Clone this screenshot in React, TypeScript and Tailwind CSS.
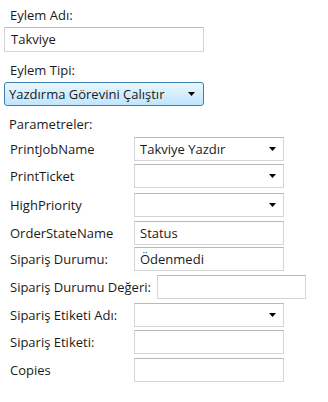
import React from 'react'

type Field = {
  label: string
  value?: string
  kind: 'combo' | 'text'
  mt: string
  wide?: boolean
}

const fields: Field[] = [
  { label: 'PrintJobName', value: 'Takviye Yazdır', kind: 'combo', mt: 'mt-[7px]' },
  { label: 'PrintTicket', kind: 'combo', mt: 'mt-[3px]' },
  { label: 'HighPriority', kind: 'combo', mt: 'mt-[5px]' },
  { label: 'OrderStateName', value: 'Status', kind: 'text', mt: 'mt-[4px]' },
  { label: 'Sipariş Durumu:', value: 'Ödenmedi', kind: 'text', mt: 'mt-[2px]' },
  { label: 'Sipariş Durumu Değeri:', kind: 'text', mt: 'mt-[4px]', wide: true },
  { label: 'Sipariş Etiketi Adı:', kind: 'combo', mt: 'mt-[4px]' },
  { label: 'Sipariş Etiketi:', kind: 'text', mt: 'mt-[3px]' },
  { label: 'Copies', kind: 'text', mt: 'mt-[4px]' },
]

function Arrow() {
  return (
    <svg width="7" height="4" viewBox="0 0 7 4" className="shrink-0">
      <path d="M0 0 H7 L3.5 4 Z" fill="#000" />
    </svg>
  )
}

function Box({ field }: { field: Field }) {
  return (
    <div
      className={`flex h-[24px] items-center border border-[#d5d5d5] border-t-[#b9b9b9] bg-white pl-[5px] pr-[7px] ${
        field.wide ? 'w-[149px]' : 'w-[150px]'
      }`}
    >
      <span className="flex-1 whitespace-nowrap leading-[20px]">{field.value ?? ''}</span>
      {field.kind === 'combo' && <Arrow />}
    </div>
  )
}

export default function App() {
  return (
    <div
      className="h-[402px] w-[328px] bg-white text-[13px] leading-none text-[#1a1a1a]"
      style={{ fontFamily: '"Segoe UI", "Open Sans", "Noto Sans", sans-serif' }}
    >
      <div className="flex flex-col pt-[8px]">
        <div className="pl-[10px] h-[14px] flex items-center">Eylem Adı:</div>
        <div className="ml-[4px] mt-[5px] flex h-[25px] w-[200px] items-center border border-[#d5d5d5] border-t-[#bdbdbd] pl-[6px]">
          Takviye
        </div>
        <div className="pl-[10px] mt-[11px] h-[14px] flex items-center">Eylem Tipi:</div>
        <div className="ml-[4px] mt-[5px] flex h-[24px] w-[200px] items-center rounded-[3px] border border-[#3c7fb1] bg-gradient-to-b from-[#eaf6fd] to-[#bee6fd] pl-[4px] pr-[8px]">
          <span className="flex-1">Yazdırma Görevini Çalıştır</span>
          <Arrow />
        </div>
        <div className="pl-[9px] mt-[12px] h-[12px] flex items-center">Parametreler:</div>

        {fields.map((f) => (
          <div key={f.label} className={`flex items-center pl-[10px] ${f.mt}`}>
            <span className={f.wide ? 'w-[147px]' : 'w-[124px]'}>{f.label}</span>
            <Box field={f} />
          </div>
        ))}
      </div>
    </div>
  )
}
